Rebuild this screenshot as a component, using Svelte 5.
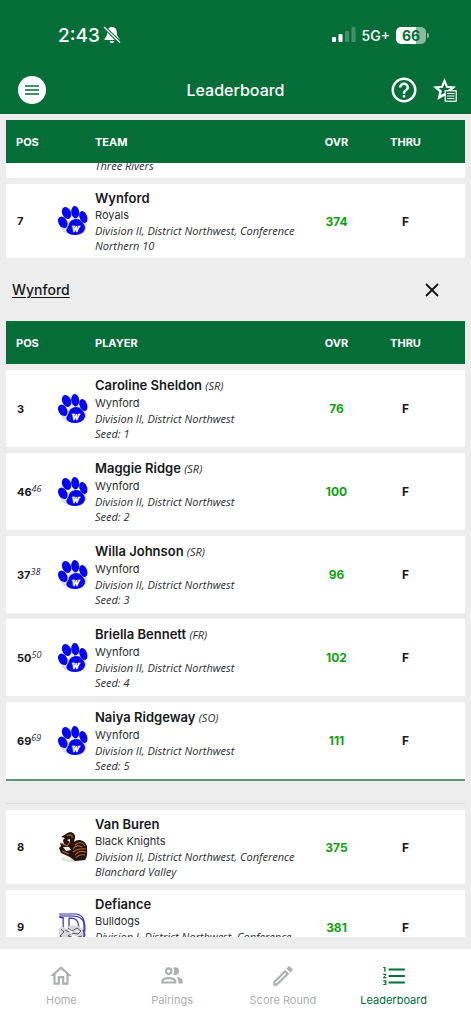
<script lang="ts">
interface Team {
	pos: string;
	name: string;
	mascot: string;
	meta: string;
	score: number;
	logo: "paw" | "knight" | "bulldog";
}

interface Player {
	pos: string;
	prev?: string;
	name: string;
	year: string;
	score: number;
}

const selected: Team = {
	pos: "7",
	name: "Wynford",
	mascot: "Royals",
	meta: "Division II, District Northwest, Conference Northern 10",
	score: 374,
	logo: "paw",
};

const nextTeams: Team[] = [
	{
		pos: "8",
		name: "Van Buren",
		mascot: "Black Knights",
		meta: "Division II, District Northwest, Conference Blanchard Valley",
		score: 375,
		logo: "knight",
	},
	{
		pos: "9",
		name: "Defiance",
		mascot: "Bulldogs",
		meta: "Division I, District Northwest, Conference",
		score: 381,
		logo: "bulldog",
	},
];

const players: Player[] = [
	{ pos: "3", name: "Caroline Sheldon", year: "SR", score: 76 },
	{ pos: "46", prev: "46", name: "Maggie Ridge", year: "SR", score: 100 },
	{ pos: "37", prev: "38", name: "Willa Johnson", year: "SR", score: 96 },
	{ pos: "50", prev: "50", name: "Briella Bennett", year: "FR", score: 102 },
	{ pos: "69", prev: "69", name: "Naiya Ridgeway", year: "SO", score: 111 },
];

const tabs = [
	{
		label: "Home",
		icon: "M12 5.69l5 4.5V18h-2v-6H9v6H7v-7.81l5-4.5M12 3L2 12h3v8h6v-6h2v6h6v-8h3L12 3z",
	},
	{
		label: "Pairings",
		icon: "M13.07 10.41A5 5 0 0 0 13.07 4.59A3.39 3.39 0 0 1 15 4A3.5 3.5 0 0 1 15 11A3.39 3.39 0 0 1 13.07 10.41M5.5 7.5A3.5 3.5 0 1 1 9 11A3.5 3.5 0 0 1 5.5 7.5M7.5 7.5A1.5 1.5 0 1 0 9 6A1.5 1.5 0 0 0 7.5 7.5M16 17V19H2V17S2 13 9 13 16 17 16 17M14 17C13.86 16.22 12.67 15 9 15S4.07 16.31 4 17M15.95 13A5.32 5.32 0 0 1 18 17V19H22V17S22 13.37 15.94 13Z",
	},
	{
		label: "Score Round",
		icon: "M14.06 9L15 9.94L5.92 19H5V18.08L14.06 9M17.66 3C17.41 3 17.15 3.1 16.96 3.29L15.13 5.12L18.88 8.87L20.71 7.04C21.1 6.65 21.1 6 20.71 5.63L18.37 3.29C18.17 3.09 17.92 3 17.66 3M14.06 6.19L3 17.25V21H6.75L17.81 9.94L14.06 6.19Z",
	},
	{
		label: "Leaderboard",
		icon: "M7 13V11H22V13H7M7 19V17H22V19H7M7 7V5H22V7H7M3 8V4.6H2V3.6H4.2V8H3M2 17V16H5V20.4H2V19.4H4V18.7H3V17.7H4V17H2M4.25 10A.75.75 0 0 1 5 10.75C5 10.95 4.92 11.14 4.79 11.27L3.12 13H5V14H2V13.08L4 11H2V10H4.25Z",
	},
];

let active = $state("Leaderboard");
let expanded = $state(true);
</script>

{#snippet logo(kind: string)}
	<svg class="logo" viewBox="0 0 30 30" aria-hidden="true">
		{#if kind === "paw"}
			<path d="M2 20Q4 27 13 29Q24 30 27 25Q30 20 28 14L15 12Z" fill="#dcdce2" />
			<g fill="#0606ea">
				<ellipse cx="8.6" cy="7" rx="4.4" ry="6.2" transform="rotate(-24 8.6 7)" />
				<ellipse cx="17.2" cy="6.2" rx="4" ry="6.2" transform="rotate(-6 17.2 6.2)" />
				<ellipse cx="25.3" cy="11" rx="3.8" ry="6.2" transform="rotate(-20 25.3 11)" />
				<ellipse cx="4.8" cy="16.3" rx="4.3" ry="6.2" transform="rotate(-30 4.8 16.3)" />
				<path d="M14.5 14C18 12 22 13 24 16C27 19 28 22 26 25C23 30 12 30 9 26C7 23 10.5 21 11 18C11.5 16 12.5 15 14.5 14Z" />
			</g>
			<text class="paw-letter" x="17.5" y="25.5" text-anchor="middle">W</text>
		{:else if kind === "knight"}
			<ellipse cx="14" cy="27" rx="11" ry="3" fill="#dedede" />
			<path d="M8 2C12-2 18 1 17 6L16 10C20 6 27 8 29 14C29 19 30 24 27 28L17 29L12 25L3 21L1 16L3 14L2 11L7 13C5 10 4 8 7 6L3 5Z" fill="#24130b" />
			<path d="M9 4C11 2 15 3 14 6M3 11L9 14L12 10M17 13Q23 8 27 14M15 17Q18 12 24 15M15 20Q20 16 28 17M17 23Q21 18 28 20M18 26Q21 22 27 23M4 19L11 22" fill="none" stroke="#b5652b" stroke-width="1.1" />
			<path d="M9 8L12 7L12 10ZM5 15L11 15L13 18L8 19ZM3 22L10 25L13 28L6 27Z" fill="#f5f1ec" />
		{:else}
			<text class="bulldog-letter" x="15" y="29" text-anchor="middle">D</text>
			<path d="M1 17L4 14L8 17L12 13L20 14L25 17L28 22L26 29H3L1 25Z" fill="#d8d8de" />
			<path d="M3 17L6 20L2 24L7 27M10 16L14 19L19 16L23 19L20 22L14 21L10 24L17 26L24 24M7 18L11 20M25 18L27 23L24 28" fill="none" stroke="#33333c" stroke-width="0.8" />
			<path d="M11 18L14 20L12 22M18 19L21 20M14 24L19 25" fill="none" stroke="#fff" stroke-width="1.4" />
			<path d="M1 2H18Q25 3 26 9V26" fill="none" stroke="#3434ad" stroke-width="1.2" />
		{/if}
	</svg>
{/snippet}

{#snippet columns()}
	<colgroup>
		<col class="col-pos" />
		<col class="col-logo" />
		<col />
		<col class="col-ovr" />
		<col class="col-thru" />
	</colgroup>
{/snippet}

{#snippet heading(label: string)}
	<thead>
		<tr>
			<th class="pos" colspan="2" scope="col">POS</th>
			<th class="info" scope="col">{label}</th>
			<th scope="col">OVR</th>
			<th class="thru" scope="col">THRU</th>
		</tr>
	</thead>
{/snippet}

{#snippet teamRow(team: Team)}
	<tr class="team">
		<td class="pos">{team.pos}</td>
		<td>{@render logo(team.logo)}</td>
		<td class="info">
			<div class="name">{team.name}</div>
			<div class="sub">{team.mascot}</div>
			<div class="meta">{team.meta}</div>
		</td>
		<td class="score">{team.score}</td>
		<td class="thru">F</td>
	</tr>
{/snippet}

<div class="app">
	<header>
		<div class="status">
			<div class="clock">
				<span>2:43</span>
				<svg width="18" height="18" viewBox="0 0 18 18" aria-hidden="true">
					<path d="M9 1C5.8 1 4.2 3.4 4.2 6.5C4.2 10 3 11 1.6 12.6V14H16.4V12.6C15 11 13.8 10 13.8 6.5C13.8 3.4 12.2 1 9 1ZM6.5 15H11.5Q11 17 9 17T6.5 15Z" fill="#fff" />
					<path d="M1 1L17 16.5" stroke="#056d38" stroke-width="3.4" />
					<path d="M1 1L17 16.5" stroke="#fff" stroke-width="1.3" />
				</svg>
			</div>
			<div class="signal">
				<svg width="24" height="16" viewBox="0 0 24 16" fill="#fff" aria-hidden="true">
					<rect x="0" y="10" width="4" height="5" rx="1" />
					<rect x="6.5" y="7" width="4" height="8" rx="1" />
					<rect x="13" y="4" width="4" height="11" rx="1" opacity="0.25" />
					<rect x="19.5" y="0" width="4" height="15" rx="1" opacity="0.25" />
				</svg>
				<span>5G+</span>
				<div class="battery"><span>66</span></div>
			</div>
		</div>
		<div class="bar">
			<button class="menu" aria-label="Menu">
				<svg width="14" height="10" viewBox="0 0 14 10" aria-hidden="true">
					<path d="M0 1H14M0 5H14M0 9H14" stroke="#056d38" stroke-width="1.6" />
				</svg>
			</button>
			<h1>Leaderboard</h1>
			<div class="actions">
				<button aria-label="Help">
					<svg width="30" height="30" viewBox="0 0 24 24" fill="#fff" aria-hidden="true">
						<path d="M11 18H13V16H11V18M12 2A10 10 0 0 0 2 12A10 10 0 0 0 12 22A10 10 0 0 0 22 12A10 10 0 0 0 12 2M12 20C7.59 20 4 16.41 4 12C4 7.59 7.59 4 12 4C16.41 4 20 7.59 20 12C20 16.41 16.41 20 12 20M12 6A4 4 0 0 0 8 10H10A2 2 0 0 1 12 8A2 2 0 0 1 14 10C14 12 11 11.75 11 15H13C13 12.75 16 12.5 16 10A4 4 0 0 0 12 6Z" />
					</svg>
				</button>
				<button aria-label="Favorites">
					<svg width="24" height="24" viewBox="0 0 24 24" aria-hidden="true">
						<path d="M11.5 0L14.7 7.9L23 8.6L16.7 14L18.6 22L11.5 17.8L4.4 22L6.3 14L0 8.6L8.3 7.9ZM11.5 5.6L9.9 9.7L5.6 10L8.9 12.8L7.9 17L11.5 14.9L15.1 17L14.1 12.8L17.4 10L13.1 9.7Z" fill="#fff" fill-rule="evenodd" />
						<rect x="12.2" y="12.8" width="11" height="10.4" fill="#056d38" stroke="#fff" stroke-width="1.2" />
						<path d="M14 15.5H21.5M14 18H21.5M14 20.5H21.5" stroke="#fff" stroke-width="1.2" />
					</svg>
				</button>
			</div>
		</div>
	</header>

	<main>
		<div class="board">
			<table>
				{@render columns()}
				{@render heading("TEAM")}
				<tbody>
					<!-- tail of the row scrolled under the heading -->
					<tr class="peek">
						<td colspan="2"></td>
						<td class="info" colspan="3"><div class="tail"><span class="meta">Three Rivers</span></div></td>
					</tr>
					{@render teamRow(selected)}
					{#if expanded}
						<tr class="detail">
							<td colspan="5">
								<div class="detail-head">
									<a href="#wynford">Wynford</a>
									<button aria-label="Close" onclick={() => (expanded = false)}>
										<svg width="14" height="14" viewBox="0 0 14 14" aria-hidden="true">
											<path d="M1 1L13 13M13 1L1 13" stroke="#111" stroke-width="1.8" />
										</svg>
									</button>
								</div>
								<table class="players">
									{@render columns()}
									{@render heading("PLAYER")}
									<tbody>
										{#each players as player, i}
											<tr>
												<td class="pos">{player.pos}{#if player.prev}<sup>{player.prev}</sup>{/if}</td>
												<td>{@render logo("paw")}</td>
												<td class="info">
													<div class="name">{player.name} <i>({player.year})</i></div>
													<div class="sub">Wynford</div>
													<div class="meta">Division II, District Northwest</div>
													<div class="meta">Seed: {i + 1}</div>
												</td>
												<td class="score">{player.score}</td>
												<td class="thru">F</td>
											</tr>
										{/each}
									</tbody>
								</table>
							</td>
						</tr>
					{/if}
					{#each nextTeams as team}
						{@render teamRow(team)}
					{/each}
				</tbody>
			</table>
		</div>
	</main>

	<nav>
		{#each tabs as tab}
			<button class:active={active === tab.label} onclick={() => (active = tab.label)}>
				<svg width="26" height="26" viewBox="0 0 24 24" fill="currentColor" aria-hidden="true">
					<path d={tab.icon} />
				</svg>
				<span>{tab.label}</span>
			</button>
		{/each}
	</nav>
</div>

<style>
:global(body) {
	margin: 0;
	background: #ededed;
}

.app {
	height: 100vh;
	display: flex;
	flex-direction: column;
	background: #ededed;
	color: #17191b;
	font-family: Inter, "Liberation Sans", sans-serif;
}

button {
	border: 0;
	padding: 0;
	background: none;
	font: inherit;
	color: inherit;
	display: flex;
	align-items: center;
	justify-content: center;
}

header {
	flex: none;
	background: #056d38;
	color: #fff;
}

.status {
	display: flex;
	align-items: center;
	justify-content: space-between;
	height: 30px;
	padding: 20px 42px 0 58px;
}

.clock,
.signal {
	display: flex;
	align-items: center;
}

.clock {
	gap: 3px;
	font-size: 19px;
	font-weight: 500;
}

.signal {
	gap: 6px;
	font-size: 14px;
	font-weight: 500;
}

.battery {
	display: flex;
	align-items: center;
}

.battery span {
	width: 30px;
	border-radius: 5px;
	background: linear-gradient(to right, #fff 66%, #8abb9f 66%);
	color: #056d38;
	font-size: 14px;
	font-weight: 700;
	line-height: 17px;
	text-align: center;
}

.battery::after {
	content: "";
	width: 2px;
	height: 5px;
	margin-left: 1px;
	border-radius: 0 2px 2px 0;
	background: #8abb9f;
}

.bar {
	display: grid;
	grid-template-columns: 1fr auto 1fr;
	align-items: center;
	height: 48px;
	padding: 16px 14px 0;
}

.menu {
	width: 28px;
	height: 28px;
	margin-left: 4px;
	border-radius: 50%;
	background: #fff;
}

h1 {
	margin: 0;
	font-size: 16px;
	font-weight: 500;
	line-height: 24px;
}

.actions {
	display: flex;
	justify-content: flex-end;
	align-items: center;
	gap: 14px;
}

main {
	flex: 1;
	min-height: 0;
	display: flex;
	padding: 6px 6px 12px;
}

.board {
	flex: 1;
	min-width: 0;
	overflow: hidden;
}

table {
	width: 100%;
	table-layout: fixed;
	border-collapse: separate;
	border-spacing: 0;
}

.col-pos {
	width: 44px;
}

.col-logo {
	width: 45px;
}

.col-ovr {
	width: 69px;
}

.col-thru {
	width: 94px;
}

th {
	height: 43px;
	padding: 0;
	background: #056d38;
	color: #fff;
	font-size: 11px;
	font-weight: 700;
	text-align: center;
}

th.pos {
	padding-left: 10px;
	text-align: left;
}

td {
	padding: 0;
	background: #fff;
	border-bottom: 6px solid #ededed;
	text-align: center;
	font-size: 12px;
	font-weight: 700;
}

td.pos {
	padding-left: 11px;
	text-align: left;
	font-size: 11px;
	white-space: nowrap;
}

th.info,
td.info {
	text-align: left;
}

td.info {
	padding: 5px 0 6px;
	font-weight: 400;
}

.team td.info {
	padding: 4px 0 5px;
}

/* team rows always keep room for two lines */
.team .meta {
	min-height: 30px;
}

.thru {
	padding-right: 25px;
}

.score {
	color: #119f11;
}

.name {
	font-size: 13px;
	font-weight: 600;
	line-height: 20px;
}

.name i,
.meta,
sup {
	font-family: "Open Sans", "Noto Sans", sans-serif;
	font-weight: 400;
	font-style: italic;
	color: #2c2e30;
}

.name i {
	font-size: 11px;
}

.sub {
	font-size: 11px;
	line-height: 15px;
	color: #2c2e30;
}

.meta {
	font-size: 11px;
	line-height: 15px;
}

sup {
	font-size: 9px;
	line-height: 1;
	vertical-align: 4px;
}

.logo {
	display: block;
	width: 30px;
	height: 30px;
	margin: 0 auto;
}

.paw-letter {
	font: italic 700 9px "Liberation Serif", serif;
	fill: #fff;
	stroke: #fff;
	stroke-width: 0.6px;
}

.bulldog-letter {
	font: 700 38px "Liberation Serif", serif;
	fill: #fff;
	stroke: #3434ad;
	stroke-width: 1.2px;
}

.peek td.info {
	padding: 0;
}

.tail {
	display: flex;
	align-items: flex-end;
	height: 10px;
	padding-bottom: 5px;
	overflow: hidden;
}

.detail > td {
	background: #ededed;
	padding-bottom: 23px;
	box-shadow: inset 0 -1px #dedede;
}

.detail-head {
	display: flex;
	align-items: center;
	justify-content: space-between;
	height: 51px;
	padding: 0 26px 6px 6px;
}

.detail-head a {
	color: #17191b;
	font-size: 14px;
	font-weight: 500;
	text-underline-offset: 2px;
}

.players tbody tr:last-child td {
	border-bottom: 2px solid #5b9572;
}

.players th {
	border-bottom: 6px solid #ededed;
}

nav {
	flex: none;
	display: grid;
	grid-template-columns: repeat(4, 1fr);
	height: 75px;
	padding: 0 22px 0 6px;
	background: #fff;
}

nav button {
	flex-direction: column;
	justify-content: flex-start;
	gap: 2px;
	padding-top: 14px;
	color: #adafb0;
	font-size: 11px;
	line-height: 18px;
}

nav button.active {
	color: #056d38;
}
</style>
